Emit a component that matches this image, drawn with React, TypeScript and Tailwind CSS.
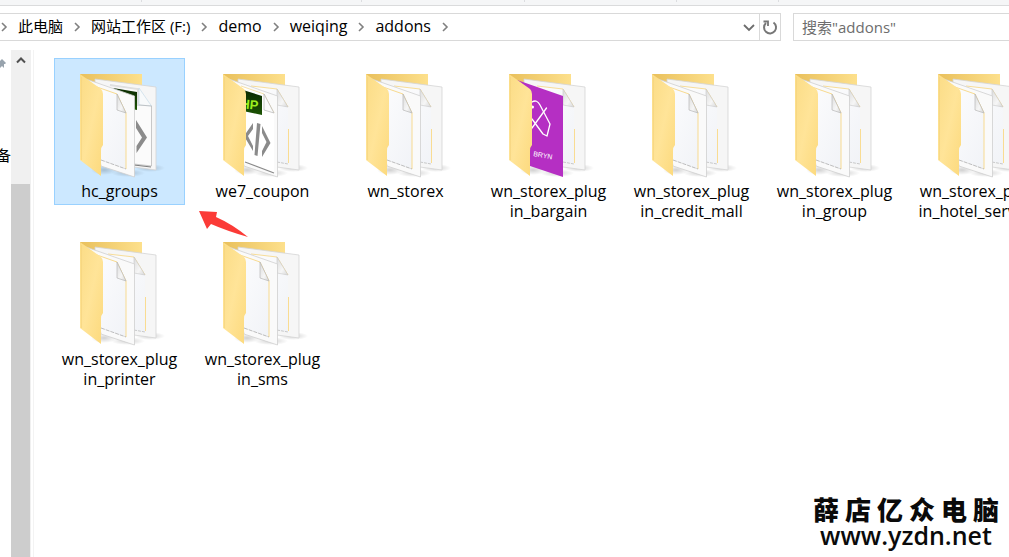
import type { ReactNode } from "react";
import { Fragment } from "react";

type Kind = "plain" | "code" | "codeBehind" | "bargain";

interface Folder {
  lines: string[];
  kind: Kind;
  selected?: boolean;
}

const folders: Folder[] = [
  { lines: ["hc_groups"], kind: "codeBehind", selected: true },
  { lines: ["we7_coupon"], kind: "code" },
  { lines: ["wn_storex"], kind: "plain" },
  { lines: ["wn_storex_plug", "in_bargain"], kind: "bargain" },
  { lines: ["wn_storex_plug", "in_credit_mall"], kind: "plain" },
  { lines: ["wn_storex_plug", "in_group"], kind: "plain" },
  { lines: ["wn_storex_plug", "in_hotel_service"], kind: "plain" },
  { lines: ["wn_storex_plug", "in_printer"], kind: "plain" },
  { lines: ["wn_storex_plug", "in_sms"], kind: "plain" },
];

const crumbs = [
  { label: "此电脑", size: "text-[15px]" },
  { label: "网站工作区 (F:)", size: "text-[15px]" },
  { label: "demo", size: "text-[16px]" },
  { label: "weiqing", size: "text-[16px]" },
  { label: "addons", size: "text-[16px]" },
];

function Chevron() {
  return (
    <svg className="h-3 w-2 shrink-0" viewBox="0 0 8 12" fill="none" stroke="#808080" strokeWidth="1.6" aria-hidden="true">
      <path d="M2 2l4 4-4 4" />
    </svg>
  );
}

function GradientDefs() {
  return (
    <svg className="absolute size-0" aria-hidden="true">
      <defs>
        <linearGradient id="cover" x1="0" y1="0" x2="1" y2="1">
          <stop offset="0" stopColor="#fbdc86" />
          <stop offset="0.5" stopColor="#ffe498" />
          <stop offset="1" stopColor="#fcd97c" />
        </linearGradient>
        <linearGradient id="back" x1="0" y1="0" x2="1" y2="0">
          <stop offset="0" stopColor="#e9c05c" />
          <stop offset="1" stopColor="#fde08c" />
        </linearGradient>
        <linearGradient id="sheet" x1="0" y1="0" x2="1" y2="1">
          <stop offset="0" stopColor="#fdfdfe" />
          <stop offset="1" stopColor="#f1f3f7" />
        </linearGradient>
        <linearGradient id="fold" x1="0" y1="0" x2="1" y2="1">
          <stop offset="0" stopColor="#dcdcdc" />
          <stop offset="0.6" stopColor="#f6f6f6" />
          <stop offset="1" stopColor="#d6d6d6" />
        </linearGradient>
        <radialGradient id="shade">
          <stop offset="0" stopColor="#000000" stopOpacity="0.18" />
          <stop offset="1" stopColor="#000000" stopOpacity="0" />
        </radialGradient>
        <linearGradient id="green" x1="0" y1="0" x2="0" y2="1">
          <stop offset="0" stopColor="#0b2a02" />
          <stop offset="1" stopColor="#1c5404" />
        </linearGradient>
      </defs>
    </svg>
  );
}

function RearPage({ kind }: { kind: Kind }) {
  return (
    <>
      <path d="M21 7L82 15V98L60 95L21 88Z" fill="#f6f6f6" stroke="#d4d4d4" strokeWidth="0.8" />
      {kind === "codeBehind" ? (
        <>
          <path d="M35 11L65 16L77 33V95L58 92V20Z" fill="#fbfbfb" />
          <path d="M36 13L64 17V34" fill="none" stroke="#dfdfdf" strokeWidth="2" />
          <path d="M65 16L77.500 34L65 33Z" fill="#f8fafb" stroke="#c7dbe8" strokeWidth="0.7" />
          <path d="M65 33L77.500 34V94L60 92" fill="none" stroke="#b4b4b4" strokeWidth="0.7" />
          <path d="M39 16L63 20V38L58 37Z" fill="url(#green)" />
          <path d="M62 48L73 65.500L62.500 81V74L68 65.500L62 56Z" fill="#8b8b8b" />
          <path d="M60 93L77 95" stroke="#5f5f5f" strokeWidth="0.8" />
        </>
      ) : (
        <>
          <path d="M34 14L60 17L71 35V92L58 90Z" fill="url(#sheet)" />
          <path d="M34 14L60 17L71 35" fill="none" stroke="#f6d98d" strokeWidth="0.9" />
          <path d="M60 17L71 35L60 33Z" fill="url(#fold)" stroke="#c8c8c8" strokeWidth="0.6" />
          <path d="M71.500 57V91" stroke="#f9dc92" strokeWidth="1" />
          <path d="M60 90L71 92" stroke="#bcbcbc" strokeWidth="0.8" strokeDasharray="3 1" />
        </>
      )}
    </>
  );
}

function FrontPage({ kind }: { kind: Kind }) {
  if (kind === "bargain") {
    return (
      <>
        <path d="M14 8L60 24V105L27 94Z" fill="#b52fc3" />
        <g fill="none" stroke="#ffffff" strokeWidth="1.3" strokeLinecap="round" strokeLinejoin="round">
          <path d="M29 30Q34 27 37 33L47 52L44 64L40 62L29 47" />
          <path d="M43.500 36L29 56" />
        </g>
        <circle cx="29.500" cy="35" r="1.5" fill="#ffffff" />
        <text x="30" y="84" fontSize="7" fill="#ffffff" className="font-['Liberation_Sans',sans-serif]" transform="rotate(10 30 84)">
          BRYN
        </text>
      </>
    );
  }
  return (
    <>
      <path d="M12 7L60.500 24V105L27 94Z" fill="#fafafa" stroke="#cfcfcf" strokeWidth="0.8" />
      {kind === "code" ? (
        <>
          <path d="M23 14L47 21L57 41V101L27 91Z" fill="#ffffff" />
          <path d="M24 14L47 22L57 41" fill="none" stroke="#f4dca0" strokeWidth="0.9" />
          <path d="M47 22L57 41L47 38Z" fill="#fbfbfb" stroke="#bcbcbc" strokeWidth="0.8" />
          <path d="M26 18L45 24V43L26 39Z" fill="url(#green)" />
          <text x="23" y="36" fontSize="13" fontWeight="700" fill="#9cf01e" className="font-['Liberation_Sans',sans-serif]" transform="rotate(6 23 36)">
            HP
          </text>
          <path d="M36 51V57L31 64L36 74V79L27 64ZM40 51L43.500 52L40.500 84L37.500 83ZM45 54L53.500 71L45 85V79L49.500 70L45 61Z" fill="#8b8b8b" />
          <path d="M28 90L57 101" stroke="#8a8a8a" strokeWidth="1.2" />
        </>
      ) : (
        <>
          <path d="M18 13L43 22L52 41V97L27 88Z" fill="url(#sheet)" />
          <path d="M23 15L43 22L52 41V97" fill="none" stroke="#f7da90" strokeWidth="1" />
          <path d="M43 22L52 41L43 38Z" fill="url(#fold)" stroke="#b8b8b8" strokeWidth="0.7" />
          <path d="M27 88L52 97" stroke="#adadad" strokeWidth="0.8" strokeDasharray="4 1" />
        </>
      )}
    </>
  );
}

function FolderIcon({ kind }: { kind: Kind }) {
  return (
    <svg className="h-[109px] w-[91px]" viewBox="0 0 91 109" aria-hidden="true">
      <ellipse cx="76" cy="96" rx="15" ry="4" fill="url(#shade)" />
      <ellipse cx="54" cy="101" rx="17" ry="4" fill="url(#shade)" />
      <ellipse cx="30" cy="98" rx="13" ry="5" fill="url(#shade)" />
      <path d="M6 2H68V50H6Z" fill="url(#back)" />
      <RearPage kind={kind} />
      <FrontPage kind={kind} />
      <path d="M6 2L27 17Q29 19 29 22V73Q27 75 27 79V104L6 88Z" fill="url(#cover)" />
      <path d="M7.500 5V88" stroke="#f4d27a" strokeWidth="0.6" />
    </svg>
  );
}

function Tile({ folder }: { folder: Folder }) {
  const state = folder.selected ? "border-[#99d1ff] bg-[#cce8ff]" : "border-transparent";
  return (
    <button type="button" aria-pressed={!!folder.selected} className={`flex flex-col items-center border pt-[13px] pb-[3px] ${state}`}>
      <FolderIcon kind={folder.kind} />
      <span className="text-[16px] leading-5 whitespace-nowrap">
        {folder.lines.map((line) => (
          <span key={line} className="block">
            {line}
          </span>
        ))}
      </span>
    </button>
  );
}

function Frame({ children }: { children: ReactNode }) {
  return (
    <div className="relative flex min-h-screen flex-col overflow-hidden bg-white font-['Open_Sans','Noto_Sans_CJK_SC',sans-serif] text-[15px] text-black">
      {children}
    </div>
  );
}

export default function App() {
  return (
    <Frame>
      <GradientDefs />
      <div className="flex h-1.5 shrink-0 border-b border-[#dadbdc] bg-[#f5f6f7]">
        <div className="h-0.5 w-[142px] border-r border-[#dcdde0]" />
        <div className="h-0.5 w-[220px] border-r border-[#dcdde0]" />
        <div className="h-0.5 w-[163px] border-r border-[#dcdde0]" />
        <div className="h-0.5 w-[152px] border-r border-[#dcdde0]" />
        <div className="h-0.5 w-[102px] border-r border-[#dcdde0]" />
      </div>

      <header className="mt-[7px] flex h-7 shrink-0 gap-3">
        <div className="flex min-w-0 flex-1 border border-l-0 border-[#d9d9d9]">
          <nav aria-label="地址" className="flex flex-1 items-center whitespace-nowrap">
            {crumbs.map(({ label, size }) => (
              <Fragment key={label}>
                <Chevron />
                <a href="#" className={`mx-2.5 pb-0.5 leading-5 ${size}`}>
                  {label}
                </a>
              </Fragment>
            ))}
            <Chevron />
          </nav>
          <button type="button" aria-label="以前的位置" className="flex w-5 items-center justify-center">
            <svg className="h-3 w-3" viewBox="0 0 12 12" fill="none" stroke="#6d6d6d" strokeWidth="1.8" aria-hidden="true">
              <path d="M1 4l5 5 5-5" />
            </svg>
          </button>
          <button type="button" aria-label="刷新" className="flex w-[21px] items-center justify-center border-l border-[#d9d9d9]">
            <svg className="size-4" viewBox="0 0 16 16" fill="none" stroke="#777777" strokeWidth="2" aria-hidden="true">
              <path d="M11.500 3.500A6 6 0 1 1 4 4" />
              <path d="M1.500 2.500H6V7" strokeWidth="1.800" />
            </svg>
          </button>
        </div>
        <input
          type="search"
          aria-label="搜索"
          placeholder={'搜索"addons"'}
          className="w-[216px] shrink-0 border border-r-0 border-[#d9d9d9] pl-2 text-[15px] leading-5 outline-none placeholder:text-[#6d6d6d]"
        />
      </header>

      <div className="mt-[9px] flex flex-1">
        <aside className="flex w-[34px] shrink-0 border-r border-[#f3f3f3]">
          <div className="w-[11px] overflow-hidden">
            <svg className="mt-2 h-3 w-2" viewBox="0 0 8 12" fill="#98a3ad" aria-hidden="true">
              <path d="M0 3L2 1L6 5L5 6L4 6V10L2 8L0 10Z" />
            </svg>
            <div className="mt-[75px] flex justify-end leading-5">备</div>
          </div>
          <div className="flex w-5 flex-col bg-[#f0f0f0]">
            <button type="button" aria-label="向上滚动" className="flex h-5 items-center justify-center">
              <svg className="h-2 w-3" viewBox="0 0 12 8" fill="none" stroke="#505050" strokeWidth="2" aria-hidden="true">
                <path d="M2 6.500l4-4 4 4" />
              </svg>
            </button>
            <div className="mt-[114px] w-[19px] flex-1 bg-[#cdcdcd]" />
          </div>
        </aside>

        <main className="min-w-0 flex-1 overflow-hidden pt-2 pl-5">
          <div className="grid grid-cols-[repeat(7,131px)] items-start gap-x-3 gap-y-px">
            {folders.map((folder) => (
              <Tile key={folder.lines.join("")} folder={folder} />
            ))}
          </div>
        </main>
      </div>

      <svg className="absolute top-[209px] left-[198px] h-[30px] w-[51px]" viewBox="0 0 51 30" fill="#fb3b37" aria-hidden="true">
        <path d="M1 2L19 3L18 8Q34 15 50 28Q29 22 13 15L9 20Z" />
      </svg>

      <div className="absolute right-[10px] bottom-2.5 flex flex-col items-center text-[#0a0a0a]">
        <div className="flex gap-1.5 font-['Noto_Sans_CJK_SC',sans-serif] text-[26px] leading-7 font-black">
          {[..."薛店亿众电脑"].map((char) => (
            <span key={char}>{char}</span>
          ))}
        </div>
        <div className="font-['Open_Sans',sans-serif] text-[25px] leading-6 font-semibold">www.yzdn.net</div>
      </div>
    </Frame>
  );
}
